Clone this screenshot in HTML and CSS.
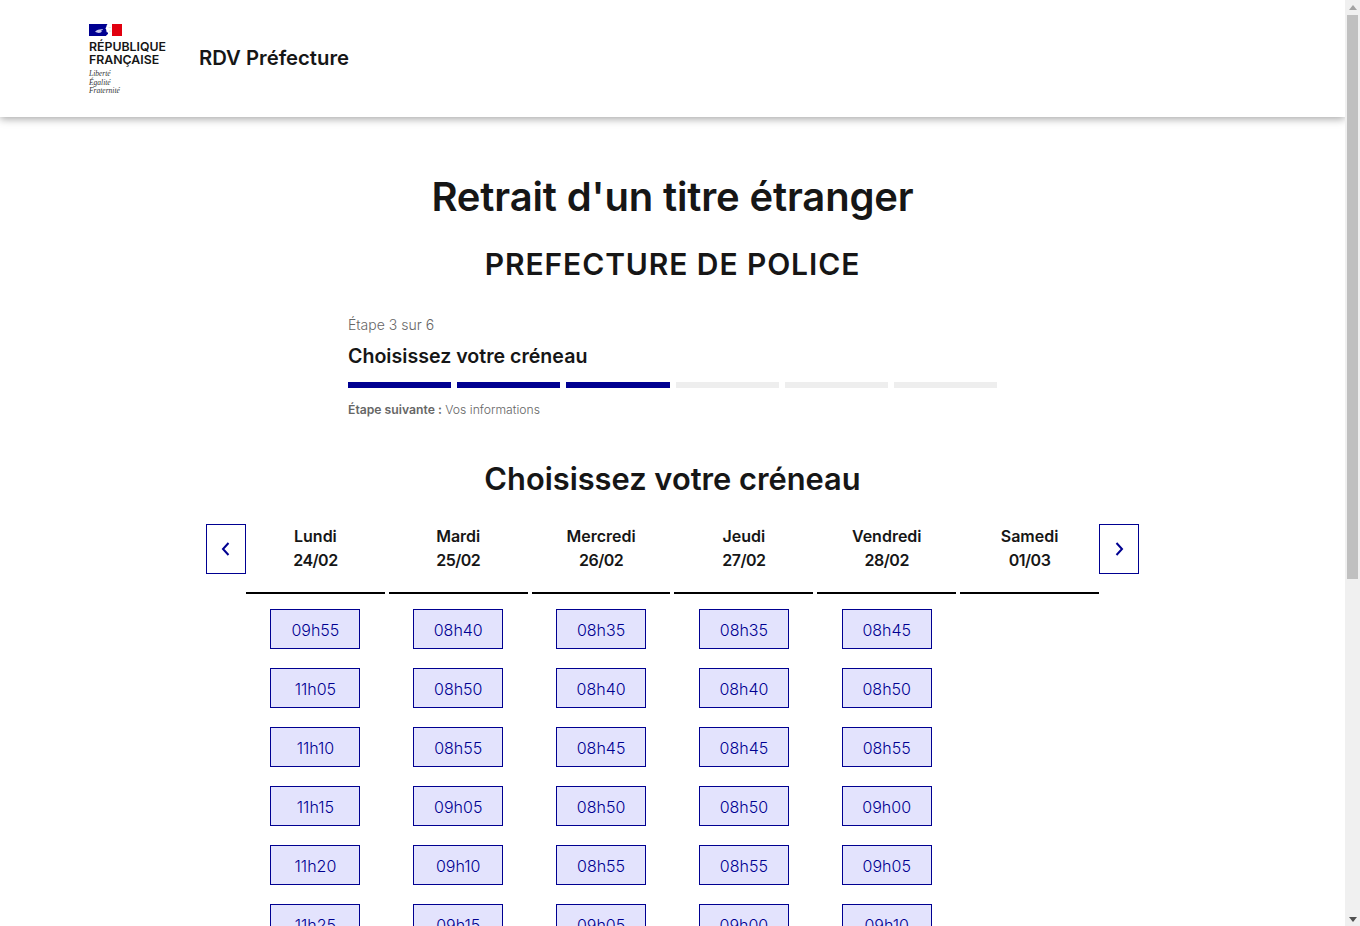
FILE: index.html
```html
<!DOCTYPE html>
<html lang="fr">
  <head>
    <meta charset="UTF-8" />
    <meta name="viewport" content="width=device-width, initial-scale=1.0" />
    <title>RDV Préfecture</title>
    <link rel="stylesheet" href="styles.css">
  </head>
  <body>
    <header class="site-header">
      <div class="logo">
        <svg class="flag" width="33" height="12" viewBox="0 0 33 12">
          <rect width="19" height="12" fill="#000091" />
          <rect x="22" width="11" height="12" fill="#e1000f" />
          <path d="M23 0h-4.500c-.8 1-1 1.900-1.200 3l-1 1.500.9.500-.2 1.300.7.500-.3 1.200c.8.600 1.500.6 2.200.6-.4 1.300-1.300 2.300-2.800 3.400h6.200z" fill="#fff" />
          <path d="M6 8c1-1.300 2.600-2.200 4.500-2.400l3.500-.6-.5 1-2 1 1.700.6-2 1.200c-2 .3-3.700-.2-4.700-.8z" fill="#c9c9ee" />
          <path d="M20 6.500h2.500v1l-2.500.5zM19.500 3h2.500v.8l-2.500.2z" fill="#e4e4e4" />
        </svg>
        <p class="logo-name">RÉPUBLIQUE<br>FRANÇAISE</p>
        <p class="logo-motto">Liberté<br>Égalité<br>Fraternité</p>
      </div>
      <p class="service-name">RDV Préfecture</p>
    </header>

    <main class="content">
      <h1>Retrait d'un titre étranger</h1>
      <h2 class="place">PREFECTURE DE POLICE</h2>

      <div class="stepper">
        <p class="step-count">Étape 3 sur 6</p>
        <p class="step-title">Choisissez votre créneau</p>
        <div class="step-bars">
          <span class="step-bar done"></span>
          <span class="step-bar done"></span>
          <span class="step-bar done"></span>
          <span class="step-bar"></span>
          <span class="step-bar"></span>
          <span class="step-bar"></span>
        </div>
        <p class="step-next"><b>Étape suivante :</b> Vos informations</p>
      </div>

      <h2 class="slots-title">Choisissez votre créneau</h2>

      <div class="calendar">
        <button class="nav-btn" aria-label="Semaine précédente">
          <svg width="16" height="16" viewBox="0 0 16 16"><path d="M10.500 2 5 8l5.500 6" /></svg>
        </button>

        <div class="days">
          <div class="day">
            <div class="day-head">Lundi<br><span class="day-date">24/02</span></div>
            <div class="slots">
              <button class="slot">09h55</button>
              <button class="slot">11h05</button>
              <button class="slot">11h10</button>
              <button class="slot">11h15</button>
              <button class="slot">11h20</button>
              <button class="slot">11h25</button>
              <button class="slot">11h30</button>
              <button class="slot">11h35</button>
              <button class="slot">11h40</button>
            </div>
          </div>
          <div class="day">
            <div class="day-head">Mardi<br><span class="day-date">25/02</span></div>
            <div class="slots">
              <button class="slot">08h40</button>
              <button class="slot">08h50</button>
              <button class="slot">08h55</button>
              <button class="slot">09h05</button>
              <button class="slot">09h10</button>
              <button class="slot">09h15</button>
              <button class="slot">09h20</button>
              <button class="slot">09h25</button>
              <button class="slot">09h30</button>
            </div>
          </div>
          <div class="day">
            <div class="day-head">Mercredi<br><span class="day-date">26/02</span></div>
            <div class="slots">
              <button class="slot">08h35</button>
              <button class="slot">08h40</button>
              <button class="slot">08h45</button>
              <button class="slot">08h50</button>
              <button class="slot">08h55</button>
              <button class="slot">09h05</button>
              <button class="slot">09h10</button>
              <button class="slot">09h15</button>
              <button class="slot">09h20</button>
            </div>
          </div>
          <div class="day">
            <div class="day-head">Jeudi<br><span class="day-date">27/02</span></div>
            <div class="slots">
              <button class="slot">08h35</button>
              <button class="slot">08h40</button>
              <button class="slot">08h45</button>
              <button class="slot">08h50</button>
              <button class="slot">08h55</button>
              <button class="slot">09h00</button>
              <button class="slot">09h05</button>
              <button class="slot">09h10</button>
              <button class="slot">09h15</button>
            </div>
          </div>
          <div class="day">
            <div class="day-head">Vendredi<br><span class="day-date">28/02</span></div>
            <div class="slots">
              <button class="slot">08h45</button>
              <button class="slot">08h50</button>
              <button class="slot">08h55</button>
              <button class="slot">09h00</button>
              <button class="slot">09h05</button>
              <button class="slot">09h10</button>
              <button class="slot">09h15</button>
              <button class="slot">09h20</button>
              <button class="slot">09h25</button>
            </div>
          </div>
          <div class="day">
            <div class="day-head">Samedi<br><span class="day-date">01/03</span></div>
            <div class="slots"></div>
          </div>
        </div>

        <button class="nav-btn" aria-label="Semaine suivante">
          <svg width="16" height="16" viewBox="0 0 16 16"><path d="M5.500 2 11 8l-5.500 6" /></svg>
        </button>
      </div>
    </main>

    <!-- Window scrollbar, it does not show up in the capture by itself -->
    <div class="scrollbar">
      <span class="arrow-up"></span>
      <span class="thumb"></span>
      <span class="arrow-down"></span>
    </div>
  </body>
</html>
```

FILE: styles.css
```css
* {
  box-sizing: border-box;
}

body {
  margin: 0;
  padding-right: 15px;
  font-family: Inter, Lato, sans-serif;
  color: #161616;
  background: #fff;
}

p,
h1,
h2 {
  margin: 0;
}

/* Header */
.site-header {
  display: flex;
  align-items: flex-start;
  height: 117px;
  padding: 24px 0 0 89px;
  box-shadow: 0 2px 8px rgba(0, 0, 0, 0.35);
}

.logo {
  width: 110px;
}

.flag {
  display: block;
  margin-bottom: 4px;
}

.logo-name {
  font-size: 12.300px;
  line-height: 13px;
  font-weight: 600;
  white-space: nowrap;
}

.logo-motto {
  margin-top: 4px;
  font-family: "Liberation Serif", serif;
  font-style: italic;
  font-size: 7.500px;
  line-height: 8.500px;
  color: #333;
}

.service-name {
  margin-top: 20px;
  font-size: 20.300px;
  line-height: 28px;
  font-weight: 600;
}

/* Titles */
.content {
  padding-top: 54px;
  padding-bottom: 60px;
  text-align: center;
}

h1 {
  font-size: 40px;
  line-height: 52px;
  font-weight: 600;
  letter-spacing: -0.15px;
}

.place {
  margin-top: 20px;
  font-size: 30px;
  line-height: 42px;
  font-weight: 600;
  letter-spacing: 0.9px;
}

/* Stepper */
.stepper {
  width: 649px;
  margin: 28px auto 0;
  text-align: left;
}

.step-count {
  font-size: 14px;
  line-height: 24px;
  font-weight: 300;
  color: #666;
}

.step-title {
  margin-top: 5px;
  font-size: 19.600px;
  line-height: 28px;
  font-weight: 600;
}

.step-bars {
  display: flex;
  gap: 6px;
  margin-top: 12px;
}

.step-bar {
  flex: 1;
  height: 6px;
  background: #eee;
}

.step-bar.done {
  background: #000091;
}

.step-next {
  margin-top: 12px;
  font-size: 12.200px;
  line-height: 20px;
  font-weight: 300;
  color: #666;
}

.step-next b {
  font-weight: 600;
}

.slots-title {
  margin-top: 39px;
  font-size: 30.800px;
  line-height: 40px;
  font-weight: 600;
}

/* Calendar */
.calendar {
  display: flex;
  align-items: flex-start;
  width: 933px;
  margin: 25px auto 0;
}

.nav-btn {
  flex: none;
  display: flex;
  align-items: center;
  justify-content: center;
  width: 40px;
  height: 50px;
  padding: 0;
  border: 1px solid #000091;
  background: #fff;
}

.nav-btn svg path {
  fill: none;
  stroke: #000091;
  stroke-width: 2;
}

.days {
  flex: 1;
  display: flex;
  gap: 4px;
}

.day {
  flex: 1;
}

.day-head {
  height: 70px;
  font-size: 16px;
  line-height: 24px;
  font-weight: 600;
  border-bottom: 2px solid #000;
}

.day-date {
  letter-spacing: -0.5px;
}

.slots {
  display: flex;
  flex-direction: column;
  align-items: center;
  gap: 19px;
  padding-top: 15px;
}

.slot {
  width: 90px;
  height: 40px;
  padding: 2px 0 0;
  font-family: inherit;
  font-size: 16px;
  font-weight: 300;
  color: #000091;
  background: #e3e3fd;
  border: 1px solid #000091;
}

/* Scrollbar */
.scrollbar {
  position: fixed;
  top: 0;
  right: 0;
  bottom: 0;
  display: flex;
  flex-direction: column;
  align-items: center;
  width: 15px;
  background: #f0f0f0;
}

.arrow-up,
.arrow-down {
  flex: none;
  width: 0;
  height: 0;
  border-left: 4px solid transparent;
  border-right: 4px solid transparent;
}

.arrow-up {
  margin: 5px 0 5px;
  border-bottom: 5px solid #a3a3a3;
}

.arrow-down {
  margin: 6px 0 4px;
  border-top: 5px solid #505050;
}

.thumb {
  flex: none;
  width: 11px;
  height: 564px;
  margin-bottom: auto;
  background: #c0c0c0;
}
```
